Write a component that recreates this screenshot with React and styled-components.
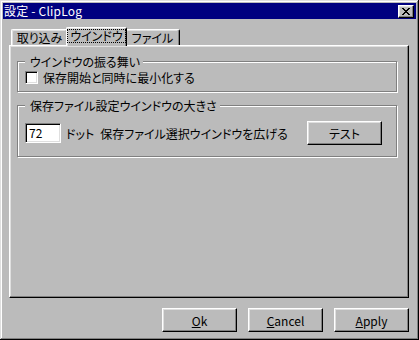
import React from "react";
import styled, { createGlobalStyle } from "styled-components";

const FACE = "#bbbbbb";
const LIGHT = "#dfdfdf";
const SHADOW = "#808080";

const Global = createGlobalStyle`
  html, body { margin: 0; padding: 0; background: ${FACE}; }
  body {
    font-family: "Noto Sans CJK JP", "Liberation Sans", sans-serif;
    font-size: 12px;
    color: #000;
    font-feature-settings: "palt";
  }
  * { box-sizing: border-box; }
`;

const Window = styled.div`
  width: 419px;
  height: 340px;
  padding: 3px;
  background: ${FACE};
  display: flex;
  flex-direction: column;
  box-shadow: inset -1px -1px #000, inset 1px 1px ${LIGHT},
    inset -2px -2px ${SHADOW}, inset 2px 2px #fff;
`;

const TitleBar = styled.div`
  height: 16px;
  background: #000080;
  color: #fff;
  display: flex;
  align-items: center;
  justify-content: space-between;
  padding: 0 2px 0 1px;
`;

const Title = styled.span`
  line-height: 14px;
  font-size: 12px;
  letter-spacing: 0.2px;
`;

const CloseButton = styled.div`
  width: 16px;
  height: 13px;
  background: ${FACE};
  border: 1px solid;
  border-color: #fff #000 #000 #fff;
  box-shadow: inset -1px -1px ${SHADOW}, inset 1px 1px ${LIGHT};
  display: flex;
  align-items: center;
  justify-content: center;
`;

const Body = styled.div`
  margin-top: 8px;
  padding: 0 7px 0 6px;
  display: flex;
  flex-direction: column;
`;

const TabStrip = styled.div`
  height: 18px;
  display: flex;
  align-items: flex-start;
  padding-left: 2px;
`;

const Tab = styled.div`
  width: ${(p) => p.$w}px;
  height: ${(p) => (p.$active ? 19 : 16)}px;
  margin: ${(p) => (p.$active ? "0 -2px" : "2px 0 0")};
  position: relative;
  z-index: ${(p) => (p.$active ? 2 : 1)};
  background: ${FACE};
  border-top: 1px solid #fff;
  border-left: 1px solid #fff;
  border-right: 1px solid #000;
  border-radius: 2px 2px 0 0;
  box-shadow: inset -1px 0 ${SHADOW}, inset 1px 1px ${LIGHT};
  display: flex;
  justify-content: center;
  align-items: ${(p) => (p.$active ? "flex-start" : "center")};
  padding-top: ${(p) => (p.$active ? "1px" : "0")};
  line-height: 13px;
`;

const Focus = styled.span`
  width: 60px;
  height: 14px;
  border: 1px dotted #000;
  display: flex;
  align-items: center;
  justify-content: center;
  line-height: 12px;
`;

const Panel = styled.div`
  height: 253px;
  padding: 9px 11px 0 7px;
  border: 1px solid;
  border-color: #fff #000 #000 #fff;
  box-shadow: inset -1px -1px ${SHADOW}, inset 1px 1px ${LIGHT};
  display: flex;
  flex-direction: column;
`;

const Group = styled.fieldset`
  margin: ${(p) => (p.$first ? "0" : "7px 0 0")};
  padding: ${(p) => p.$pad};
  min-width: 0;
  border: 1px solid ${SHADOW};
  box-shadow: 1px 1px 0 #fff, inset 1px 1px 0 #fff;
`;

const Legend = styled.legend`
  padding: 0 3px 0 5px;
  line-height: 13px;
  height: 13px;
  background: ${FACE};
`;

const Row = styled.div`
  height: ${(p) => p.$h}px;
  display: flex;
  align-items: center;
`;

const CheckBox = styled.div`
  width: 13px;
  height: 13px;
  background: #fff;
  border: 1px solid;
  border-color: ${SHADOW} #fff #fff ${SHADOW};
  box-shadow: inset 1px 1px #000, inset -1px -1px ${LIGHT};
`;

const Text = styled.span`
  margin-left: ${(p) => p.$ml || 0}px;
  line-height: 13px;
  white-space: nowrap;
`;

const NumberBox = styled.div`
  width: 36px;
  height: 20px;
  background: #fff;
  border: 1px solid;
  border-color: ${SHADOW} #fff #fff ${SHADOW};
  box-shadow: inset 1px 1px #000, inset -1px -1px ${LIGHT};
  padding: 2px 0 0 3px;
  line-height: 14px;
`;

const Button = styled.div`
  width: 75px;
  height: 24px;
  margin-left: ${(p) => (p.$auto ? "auto" : "0")};
  border: 1px solid;
  border-color: #fff #000 #000 #fff;
  box-shadow: inset -1px -1px ${SHADOW}, inset 1px 1px ${LIGHT};
  display: flex;
  align-items: center;
  justify-content: center;
  line-height: 13px;
`;

const ButtonRow = styled.div`
  margin-top: 10px;
  display: flex;
  justify-content: flex-end;
  gap: 11px;
`;

const Key = styled.span`
  text-decoration: underline;
  text-underline-offset: 1px;
`;

export default function App() {
  return (
    <>
      <Global />
      <Window>
        <TitleBar>
          <Title>設定 - ClipLog</Title>
          <CloseButton>
            <svg width="8" height="7" viewBox="0 0 8 7" shapeRendering="crispEdges">
              <path
                d="M0 0h2v1h-2zM6 0h2v1h-2zM1 1h2v1h-2zM5 1h2v1h-2zM2 2h4v1h-4zM3 3h2v1h-2zM2 4h4v1h-4zM1 5h2v1h-2zM5 5h2v1h-2zM0 6h2v1h-2zM6 6h2v1h-2z"
                fill="#000"
              />
            </svg>
          </CloseButton>
        </TitleBar>
        <Body>
          <TabStrip>
            <Tab $w={57}>取り込み</Tab>
            <Tab $w={61} $active>
              <Focus>ウインドウ</Focus>
            </Tab>
            <Tab $w={55}>ファイル</Tab>
          </TabStrip>
          <Panel>
            <Group $first $pad="3px 7px 7px 7px">
              <Legend>ウインドウの振る舞い</Legend>
              <Row $h={13}>
                <CheckBox />
                <Text $ml={5}>保存開始と同時に最小化する</Text>
              </Row>
            </Group>
            <Group $pad="9px 14px 11px 7px">
              <Legend>保存ファイル設定ウインドウの大きさ</Legend>
              <Row $h={24}>
                <NumberBox>72</NumberBox>
                <Text $ml={5}>ドット</Text>
                <Text $ml={6}>保存ファイル選択ウインドウを広げる</Text>
                <Button $auto>テスト</Button>
              </Row>
            </Group>
          </Panel>
          <ButtonRow>
            <Button>
              <span>
                <Key>O</Key>k
              </span>
            </Button>
            <Button>
              <span>
                <Key>C</Key>ancel
              </span>
            </Button>
            <Button>
              <span>
                <Key>A</Key>pply
              </span>
            </Button>
          </ButtonRow>
        </Body>
      </Window>
    </>
  );
}
